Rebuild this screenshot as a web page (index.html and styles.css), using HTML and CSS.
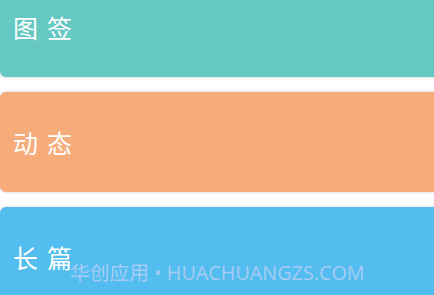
FILE: index.html
```html
<!DOCTYPE html>
<html lang="zh">
<head>
<meta charset="utf-8">
<link rel="stylesheet" href="styles.css">
</head>
<body>
<div class="list">
  <div class="card teal"><span class="label">图签</span></div>
  <div class="card orange"><span class="label">动态</span></div>
  <div class="card blue"><span class="label">长篇</span></div>
</div>
<div class="watermark">华创应用 • HUACHUANGZS.COM</div>
</body>
</html>
```
FILE: styles.css
```css
html, body {
  margin: 0;
  padding: 0;
  background: #ffffff;
  width: 434px;
  height: 295px;
  overflow: hidden;
  position: relative;
}
.list {
  display: flex;
  flex-direction: column;
  gap: 15px;
  margin-top: -23px;
  margin-right: -12px;
}
.card {
  height: 100px;
  border-radius: 6px;
  display: flex;
  align-items: center;
  padding-left: 13px;
  box-shadow: 0 0 3px rgba(0, 0, 0, 0.22);
}
.teal { background: #66c8c2; }
.orange { background: #f5ab7a; }
.blue { background: #52bdee; }
.label {
  font-family: "Noto Sans CJK SC", "Noto Sans", sans-serif;
  font-size: 25px;
  color: #ffffff;
  letter-spacing: 9px;
  line-height: 1;
}
.watermark {
  position: absolute;
  left: 70px;
  top: 263px;
  font-family: "Open Sans", "Noto Sans CJK SC", sans-serif;
  font-size: 19.8px;
  line-height: 19px;
  color: rgba(225, 215, 250, 0.6);
  white-space: nowrap;
}
```
